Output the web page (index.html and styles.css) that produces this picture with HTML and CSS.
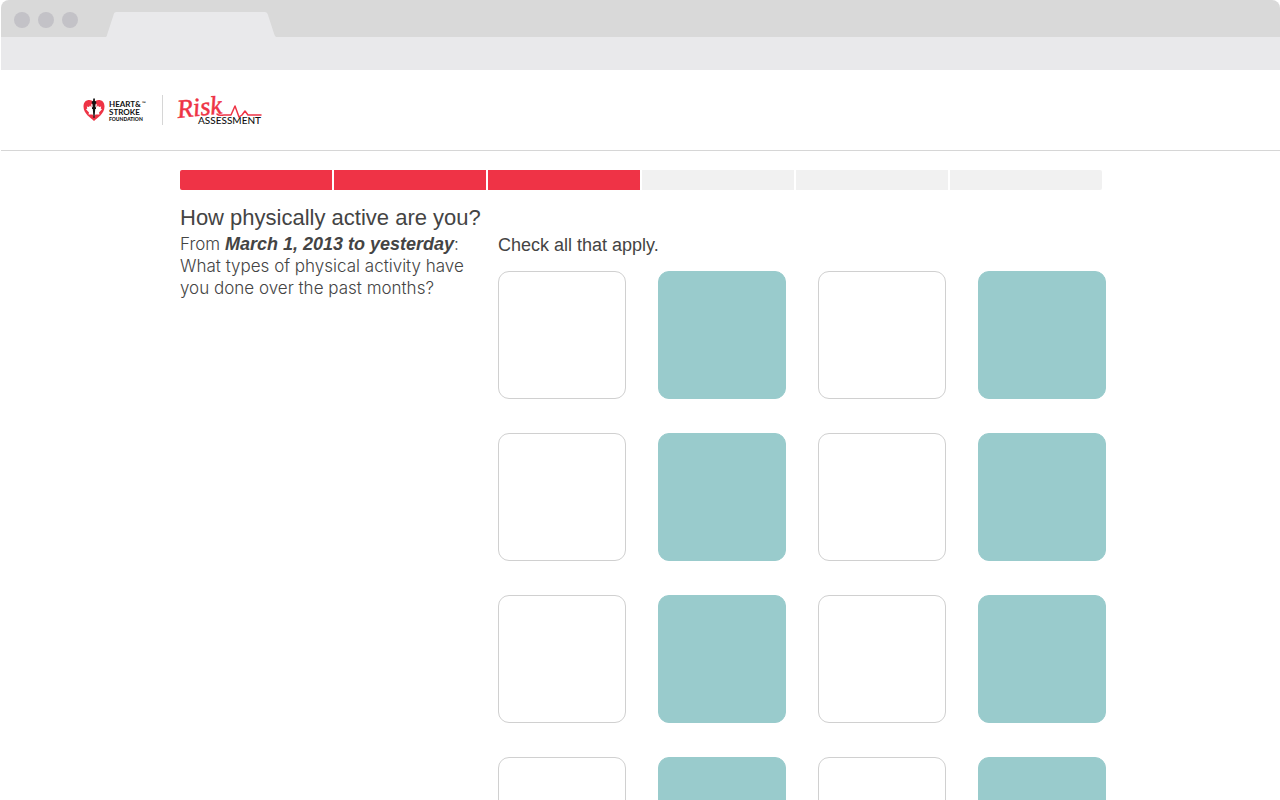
FILE: index.html
```html
<!DOCTYPE html>
<html lang="en">
<head>
    <meta charset="UTF-8">
    <meta name="viewport" content="width=device-width, initial-scale=1.0">
    <title>Risk Assessment</title>
    <link rel="stylesheet" href="styles.css">
</head>
<body>
    <div class="browser-bar">
        <div class="tab-strip">
            <span class="dot"></span>
            <span class="dot"></span>
            <span class="dot"></span>
            <svg class="tab" width="170" height="25" viewBox="0 0 170 25" aria-hidden="true">
                <path d="M0 25 C1 24 1 23 1.500 21.500 L7.500 3 C8 1 8.500 0 10.500 0 H158.500 C160.500 0 161.500 1 162 3 L168 21.500 C168.500 23 169 24 170 25 Z" fill="#e9e9eb"/>
            </svg>
        </div>
        <div class="toolbar"></div>
    </div>

    <header class="site-header">
        <a class="logo" href="#" aria-label="Heart and Stroke Foundation">
            <svg width="64" height="26" viewBox="0 0 64 26">
                <path d="M11 24 C8 21 0.500 17 0.500 9.500 C0.500 5 3.200 3 6.200 3 C8.500 3 10 4 11 5.500 C12 4 13.500 3 15.800 3 C18.800 3 21.500 5 21.500 9.500 C21.500 17 14 21 11 24 Z" fill="#ee3345"/>
                <path d="M11 19.500 L9.500 17.500 L5.500 17.500 L6 15.500 L3 12.300 L4.300 11.500 L3.800 9.500 L6 10 L7 8.500 L8.500 10.500 L8.200 7 L11 8 L13.800 7 L13.500 10.500 L15 8.500 L16 10 L18.200 9.500 L17.700 11.500 L19 12.300 L16 15.500 L16.500 17.500 L12.500 17.500 Z" fill="#fff"/>
                <path d="M11 1 C12.400 2.200 12 3.200 11.800 4 L13.200 4.500 V6 L12.400 7 V10 L13 10.500 V12 H12.200 L11.500 21 H10.500 L9.800 12 H9 V10.500 L9.600 10 V7 L8.800 6 V4.500 L10.200 4 C9.900 3.200 10 2.200 11 1 Z" fill="#111"/>
                <text class="brand" x="26" y="10">HEART&amp;</text>
                <text class="brand-mark" x="59" y="8">™</text>
                <text class="brand" x="26" y="18">STROKE</text>
                <text class="brand-small" x="26" y="24">FOUNDATION</text>
            </svg>
        </a>
        <span class="divider"></span>
        <a class="logo" href="#" aria-label="Risk Assessment">
            <svg width="86" height="34" viewBox="0 0 86 34">
                <text class="risk" x="1" y="25" transform="rotate(-6 1 25)">Risk</text>
                <path d="M40 21 C42 23.500 45 22 47 22 H54 L58 13 L62 24 L65 22 L68 18 L71 22 H84" fill="none" stroke="#ee3345" stroke-width="1.500" stroke-linejoin="round" stroke-linecap="round"/>
                <text class="assessment" x="21" y="31">ASSESSMENT</text>
            </svg>
        </a>
    </header>

    <main class="content">
        <div class="progress" role="progressbar" aria-label="Progress" aria-valuemin="0" aria-valuemax="6" aria-valuenow="3">
            <span class="step done"></span>
            <span class="step done"></span>
            <span class="step done"></span>
            <span class="step"></span>
            <span class="step"></span>
            <span class="step"></span>
        </div>

        <h1>How physically active are you?</h1>

        <div class="question">
            <p class="intro">From <strong>March 1, 2013 to yesterday</strong>:<br>What types of physical activity have<br>you done over the past months?</p>

            <fieldset class="answers">
                <legend>Check all that apply.</legend>
                <div class="tiles">
                    <input type="checkbox" class="tile" aria-label="Activity 1">
                    <input type="checkbox" class="tile" aria-label="Activity 2" checked>
                    <input type="checkbox" class="tile" aria-label="Activity 3">
                    <input type="checkbox" class="tile" aria-label="Activity 4" checked>
                    <input type="checkbox" class="tile" aria-label="Activity 5">
                    <input type="checkbox" class="tile" aria-label="Activity 6" checked>
                    <input type="checkbox" class="tile" aria-label="Activity 7">
                    <input type="checkbox" class="tile" aria-label="Activity 8" checked>
                    <input type="checkbox" class="tile" aria-label="Activity 9">
                    <input type="checkbox" class="tile" aria-label="Activity 10" checked>
                    <input type="checkbox" class="tile" aria-label="Activity 11">
                    <input type="checkbox" class="tile" aria-label="Activity 12" checked>
                    <input type="checkbox" class="tile" aria-label="Activity 13">
                    <input type="checkbox" class="tile" aria-label="Activity 14" checked>
                    <input type="checkbox" class="tile" aria-label="Activity 15">
                    <input type="checkbox" class="tile" aria-label="Activity 16" checked>
                </div>
            </fieldset>
        </div>
    </main>
</body>
</html>
```
FILE: styles.css
```css
* {
    box-sizing: border-box;
}

body {
    margin: 0;
    padding-left: 1px;
    font-family: "Liberation Sans", Arial, sans-serif;
    background-color: #fff;
    color: #444;
}

/* Browser bar */
.browser-bar {
    border-radius: 8px 8px 0 0;
    overflow: hidden;
}

.tab-strip {
    display: flex;
    align-items: center;
    gap: 8px;
    height: 37px;
    padding: 2px 13px 0;
    background-color: #d9d9d9;
}

.dot {
    width: 16px;
    height: 16px;
    border-radius: 50%;
    background-color: #c3c2c7;
}

.tab {
    align-self: flex-end;
    margin-left: 20px;
}

.toolbar {
    height: 33px;
    background-color: #e9e9eb;
}

/* Header */
.site-header {
    display: flex;
    align-items: center;
    height: 81px;
    padding: 0 82px;
    border-bottom: 1px solid #d6d6d6;
}

.logo svg {
    display: block;
    overflow: visible;
}

.divider {
    width: 1px;
    height: 30px;
    margin: 0 14px 0 15px;
    background-color: #d6d6d6;
}

.brand {
    font: 700 8px Lato, sans-serif;
    fill: #111;
}

.brand-small {
    font: 900 5px Lato, sans-serif;
    fill: #111;
}

.brand-mark {
    font: 700 5px Lato, sans-serif;
    fill: #111;
}

.risk {
    font: italic 400 26px "Liberation Serif", serif;
    fill: #ee3345;
    stroke: #ee3345;
    stroke-width: 0.5px;
}

.assessment {
    font: 500 10px Lato, sans-serif;
    fill: #111;
}

/* Question */
.content {
    max-width: 1105px;
    padding: 19px 0 32px 179px;
}

.progress {
    display: flex;
    gap: 2px;
    height: 20px;
    margin-right: 4px;
    border-radius: 2px;
    overflow: hidden;
}

.step {
    flex: 1;
    background-color: #f1f1f1;
}

.step.done {
    background-color: #ef3346;
}

h1 {
    margin: 15px 0 0;
    font-size: 22px;
    line-height: 26px;
    font-weight: 400;
}

.question {
    display: grid;
    grid-template-columns: 1fr auto;
}

.intro {
    margin: 2px 0 0;
    font-family: Inter, "Liberation Sans", sans-serif;
    font-size: 17px;
    line-height: 22px;
    font-weight: 300;
}

.intro strong {
    font-family: "Liberation Sans", Arial, sans-serif;
    font-size: 18px;
    font-style: italic;
    font-weight: 700;
}

.answers {
    margin: 0;
    padding: 0;
    border: none;
}

.answers legend {
    padding: 4px 0 16px;
    font-size: 18px;
    line-height: 20px;
}

.tiles {
    display: grid;
    grid-template-columns: repeat(4, 128px);
    gap: 34px 32px;
}

.tile {
    appearance: none;
    width: 128px;
    height: 128px;
    margin: 0;
    border: 1px solid #d0d0d0;
    border-radius: 11px;
    background-color: #fff;
    cursor: pointer;
}

.tile:checked {
    border-color: #99cbcc;
    background-color: #99cbcc;
}
```
